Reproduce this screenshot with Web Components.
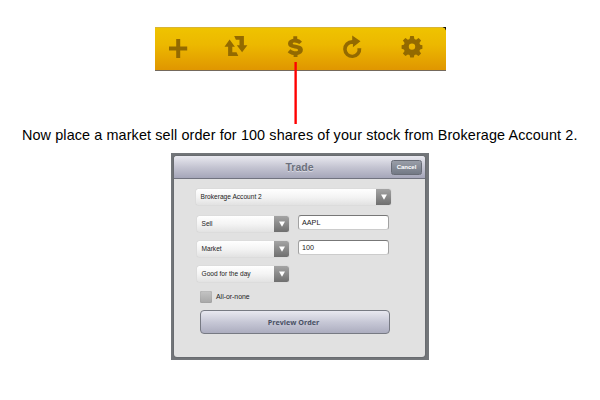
<!DOCTYPE html>
<html lang="en"><head><meta charset="utf-8"><title>Trade order</title>
<style>html,body{margin:0;width:600px;height:400px;overflow:hidden;background:#fff;font-family:"Liberation Sans",Arial,sans-serif;color:#000}</style></head>
<body><trade-guide></trade-guide>
<script>
const define=(name,html)=>{const t=document.createElement('template');t.innerHTML=html;
customElements.define(name,class extends HTMLElement{constructor(){super();this.attachShadow({mode:'open'}).append(t.content.cloneNode(true));}});};

define('tool-bar',`<style>
:host{display:block;position:relative;box-sizing:border-box;width:291px;height:44px;background:linear-gradient(#efc300,#ecb800 40%,#e09600);border-bottom:1px solid #74695c;border-top:1px solid #d8b535}
svg{display:block;width:291px;height:42px}
i{position:absolute;left:139px;top:34px;width:3px;height:62px;background:linear-gradient(90deg,#ff000090 1px,#f00 1px 2px,#ff0000d0 2px)}
b{position:absolute;right:0;top:-1px;width:4px;height:4px;background:radial-gradient(circle at 0 100%,transparent 3.5px,#111 4px)}
</style>
<svg viewBox="155 28 291 42" fill="#936a00">
<path d="M176.2 39h4v7.600h7v4h-7v7.500h-4v-7.500h-7.200v-4h7.200z"/>
<path d="M229.600 39.500l5.300 7.200h-2.600v5.500h4.200l1.800 3.800h-10.200v-9.300h-3.600zM234.200 36h9.700v9.200h3.500l-5.300 7-5.300-7h2.700v-5.400h-3.600z"/>
<path d="M302 41.700l-2.700 2.300c-1.500-1-3-1.500-4.600-1.500-1.300 0-2 .4-2 1.100 0 2.100 10.200.4 10.200 6.200 0 2.800-2.100 4.500-5.400 5.100v2.100h-3.900v-2c-2.400-.3-4.500-1.300-5.900-2.800l2.700-3c1.600 1.400 3.500 2 5.300 2 1.600 0 2.400-.5 2.400-1.300 0-2.300-10.100-.7-10.100-6.200 0-2.600 2-4.300 5.300-4.900V36.300h3.900v2.400c1.900.4 3.500 1.400 4.800 3z"/>
<path d="M352.200 35.500l8.300 5.700-7.600 6v-3.200a5.400 5.400 0 1 0 4.500 4.200h3.900a9.100 9.100 0 1 1-9.100-8.300z"/>
<path fill-rule="evenodd" d="M410.200 36h3.600l.6 3 1.700.7 2.500-1.700 2.500 2.500-1.700 2.500.7 1.700 2.300.6v3.500l-2.300.6-.7 1.700 1.700 2.500-2.500 2.500-2.500-1.700-1.700.7-.6 2.400h-3.600l-.6-2.400-1.700-.7-2.500 1.700-2.500-2.500 1.700-2.500-.7-1.700-2.300-.6v-3.500l2.300-.6.7-1.700-1.700-2.500 2.500-2.500 2.500 1.700 1.700-.7zM412 43.400a3.200 3.200 0 1 0 0 6.400 3.200 3.200 0 0 0 0-6.400z"/>
</svg><b></b><i></i>`);

define('select-box',`<style>
:host{display:flex;box-sizing:border-box;height:16px;border-radius:2.500px;overflow:hidden;background:linear-gradient(#fff,#f4f4f4 50%,#e2e2e2);box-shadow:0 0 1px #aaa;font-size:6.600px;line-height:16px;color:#222}
span{flex:1;padding-left:4.500px;white-space:nowrap}
i{width:15px;background:linear-gradient(#a4a4a4,#6f6f6f);display:grid;place-items:center}
svg{width:6px;height:6px}
</style><span><slot></slot></span><i><svg viewBox="0 0 6 6"><path d="M0 .5h6L3 5.800z" fill="#fff"/></svg></i>`);

define('text-box',`<style>
:host{display:block;box-sizing:border-box;width:91px;height:15px;border:1px solid #a2a2a2;border-top-color:#777;border-bottom-color:#ccc;border-radius:3px;background:#fff;padding-left:3px;font-size:7.200px;line-height:14px;color:#222}
</style><slot></slot>`);

define('check-box',`<style>
:host{display:flex;gap:4px;height:12px;font-size:6.900px;line-height:12px;color:#222}
i{width:12px;height:12px;border-radius:2px;background:linear-gradient(#c4c4c4,#a7a7a7);box-shadow:inset 0 0 1px #777}
</style><i></i><slot></slot>`);

define('trade-dialog',`<style>
:host{display:block;box-sizing:border-box;width:258px;height:207px;background:#73767a;padding:3px 4px 3px 3px}
main{height:201px;border-radius:3px;background:#e1e1e1;overflow:hidden;box-shadow:0 0 2px #4d4f54}
header{box-sizing:border-box;height:23px;background:linear-gradient(#e9e9f0,#c5c5d2 50%,#a5a6b9);border-bottom:1px solid #71737f;display:grid;grid-template-columns:1fr auto 1fr;align-items:center;padding:0 3px}
h1{grid-column:2;margin:0;font-size:10.500px;line-height:22px;color:#6d717d;text-shadow:0 1px #d9dae3}
button{justify-self:end;box-sizing:border-box;width:31px;height:15px;padding:0;border:1px solid #686c76;border-radius:2.500px;background:linear-gradient(#999ea8,#737985);color:#fff;font:bold 6px "Liberation Sans",sans-serif}
section{padding:10px 0 0 22px}
.row{display:flex;gap:9px;padding-left:1px;align-items:flex-start}
.row select-box{width:92px;margin-top:1px}
.wide{width:195px}
.r1{margin-top:10px}.r2{margin-top:8px}.r3{margin-top:8px}
check-box{margin:9px 0 0 4px}
.preview{box-sizing:border-box;display:grid;place-items:center;width:190px;height:24px;margin:7px 0 0 4px;padding-right:3px;border:1px solid #777a83;border-radius:4px;background:linear-gradient(#e8e8f0,#c7c8d6 50%,#acadbf);font:bold 7.200px "Open Sans",sans-serif;color:#495064}
</style>
<main><header><h1>Trade</h1><button>Cancel</button></header>
<section><select-box class="wide">Brokerage Account 2</select-box>
<div class="row r1"><select-box>Sell</select-box><text-box>AAPL</text-box></div>
<div class="row r2"><select-box>Market</select-box><text-box>100</text-box></div>
<div class="row r3"><select-box>Good for the day</select-box></div>
<check-box>All-or-none</check-box><div class="preview">Preview Order</div></section></main>`);

define('trade-guide',`<style>
:host{display:flex;flex-direction:column;align-items:flex-start;width:600px;height:400px;box-sizing:border-box;padding-top:27px}
tool-bar{margin-left:155px}
p{margin:55px 0 0 22px;height:18px;font-size:14.400px;line-height:18px;white-space:nowrap;letter-spacing:.11px}
trade-dialog{margin:9px 0 0 171px}
</style><tool-bar></tool-bar><p>Now place a market sell order for 100 shares of your stock from Brokerage Account 2.</p><trade-dialog></trade-dialog>`);
</script></body></html>
